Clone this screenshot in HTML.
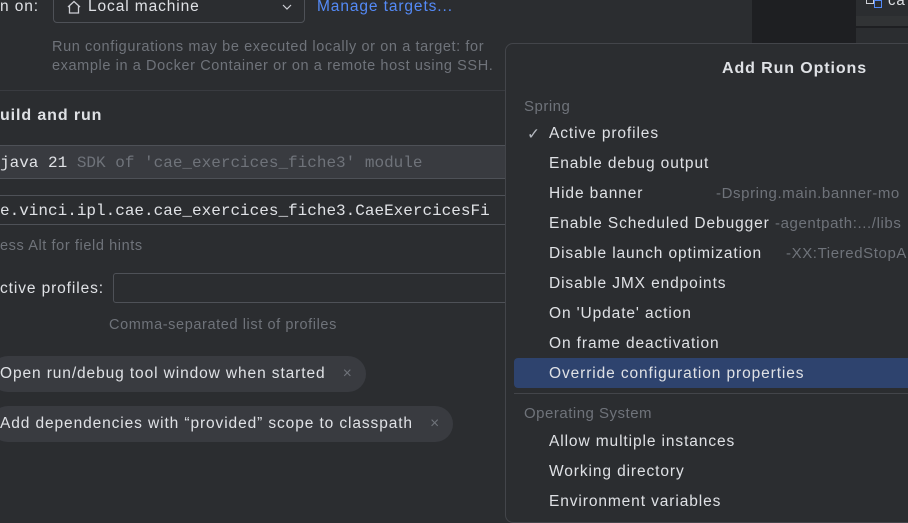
<!DOCTYPE html><html><head><style>
*{margin:0;padding:0;box-sizing:border-box}
body{width:908px;height:507px;overflow:hidden;background:#2b2d30;font-family:"Liberation Sans",sans-serif;color:#dfe1e5;position:relative;font-size:15.5px;letter-spacing:0.9px}
.a{position:absolute;white-space:nowrap}
.g{color:#6f737a}
.m{font-family:"Liberation Mono",monospace;font-size:16px;letter-spacing:0}
.pill{position:absolute;background:#393b40;border-radius:18px;height:36px;line-height:36px;padding:0 12px 0 0}
.it{position:absolute;left:549px;white-space:nowrap;font-size:15.5px}
.h{position:absolute;white-space:nowrap;color:#6f737a;font-size:15px}
</style></head><body>
<div class="a" style="left:0;top:-2px">n on:</div>
<div class="a" style="left:53px;top:-8px;width:252px;height:31px;border:1px solid #4e5157;border-radius:4px"></div>
<svg class="a" style="left:66px;top:0" width="16" height="14" viewBox="0 0 16 14"><path d="M2 7 L8 1.5 L14 7 M3.5 6 V13 H12.5 V6" fill="none" stroke="#ced0d6" stroke-width="1.3"/></svg>
<div class="a" style="left:88px;top:-2px">Local machine</div>
<svg class="a" style="left:282px;top:4px" width="10" height="6"><path d="M1 1 L5 5 L9 1" fill="none" stroke="#ced0d6" stroke-width="1.2"/></svg>
<div class="a" style="left:317px;top:-2px;color:#548af7">Manage targets...</div>
<div class="a g" style="left:52px;top:38px;font-size:14.5px;line-height:19px;letter-spacing:0.6px">Run configurations may be executed locally or on a target: for<br>example in a Docker Container or on a remote host using SSH.</div>
<div class="a" style="left:0;top:90px;width:510px;height:1px;background:#393b40"></div>
<div class="a" style="left:0;top:107px;font-weight:bold;font-size:16px">uild and run</div>
<div class="a" style="left:0;top:145px;width:510px;height:34px;background:#393b40;border-top:1px solid #4e5157;border-bottom:1px solid #4e5157"></div>
<div class="a m" style="left:0;top:154px">java 21 <span class="g">SDK of 'cae_exercices_fiche3' module</span></div>
<div class="a" style="left:0;top:195px;width:510px;height:30px;background:#2b2d30;border-top:1px solid #4e5157;border-bottom:1px solid #4e5157"></div>
<div class="a m" style="left:0;top:202px">e.vinci.ipl.cae.cae_exercices_fiche3.CaeExercicesFi</div>
<div class="a g" style="left:0;top:238px;font-size:14.5px;letter-spacing:0.6px">ess Alt for field hints</div>
<div class="a" style="left:0;top:280px">ctive profiles:</div>
<div class="a" style="left:113px;top:273px;width:400px;height:30px;border:1px solid #4e5157;border-radius:3px"></div>
<div class="a g" style="left:109px;top:317px;font-size:14.5px;letter-spacing:0.6px">Comma-separated list of profiles</div>
<div class="pill" style="left:-10px;top:356px;width:376px;padding-left:10px">Open run/debug tool window when started <span class="g" style="margin-left:12px">×</span></div>
<div class="pill" style="left:-10px;top:406px;width:463px;padding-left:10px">Add dependencies with “provided” scope to classpath <span class="g" style="margin-left:12px">×</span></div>
<div class="a" style="left:752px;top:0;width:104px;height:43px;background:#1e1f22"></div>
<div class="a" style="left:856px;top:16px;width:52px;height:10px;background:#313335"></div>
<div class="a" style="left:856px;top:26px;width:52px;height:2px;background:#1e1f22"></div>
<div class="a" style="left:866px;top:-6px;width:8px;height:10px;border:1.5px solid #ced0d6"></div>
<div class="a" style="left:874px;top:0;width:8px;height:8px;border:1.5px solid #548af7"></div>
<div class="a" style="left:888px;top:-8px;font-size:15px">ca</div>
<div class="a" style="left:505px;top:43px;width:420px;height:480px;background:#2b2d30;border:1px solid #43454a;border-radius:8px"></div>
<div class="a" style="left:722px;top:60px;font-weight:bold;font-size:16px">Add Run Options</div>
<div class="h" style="left:524px;top:98px;letter-spacing:0.5px">Spring</div>
<div class="a" style="left:527px;top:125px;color:#b4b8bf">✓</div>
<div class="it" style="top:125px">Active profiles</div>
<div class="it" style="top:155px">Enable debug output</div>
<div class="it" style="top:185px">Hide banner</div><div class="h" style="left:716px;top:185px;letter-spacing:0.6px">-Dspring.main.banner-mo</div>
<div class="it" style="top:215px">Enable Scheduled Debugger</div><div class="h" style="left:775px;top:215px;letter-spacing:0.6px">-agentpath:.../libs</div>
<div class="it" style="top:245px">Disable launch optimization</div><div class="h" style="left:786px;top:245px;letter-spacing:0.6px">-XX:TieredStopA</div>
<div class="it" style="top:275px">Disable JMX endpoints</div>
<div class="it" style="top:305px">On 'Update' action</div>
<div class="it" style="top:335px">On frame deactivation</div>
<div class="a" style="left:514px;top:358px;width:400px;height:30px;background:#2e436e;border-radius:4px"></div>
<div class="it" style="top:365px">Override configuration properties</div>
<div class="a" style="left:514px;top:393px;width:400px;height:1px;background:#43454a"></div>
<div class="h" style="left:524px;top:405px;letter-spacing:0.5px">Operating System</div>
<div class="it" style="top:433px">Allow multiple instances</div>
<div class="it" style="top:463px">Working directory</div>
<div class="it" style="top:493px">Environment variables</div>
</body></html>
